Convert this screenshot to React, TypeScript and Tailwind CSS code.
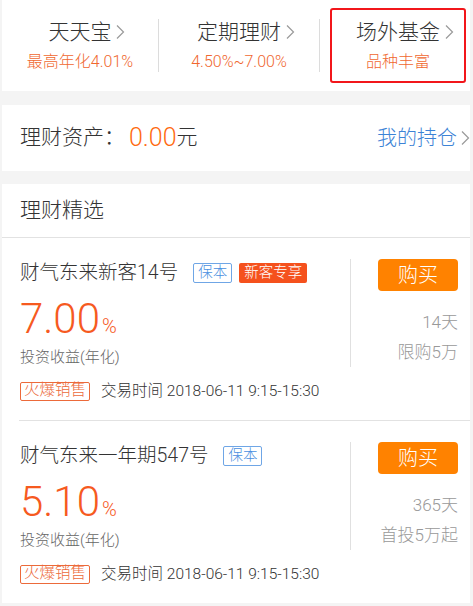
import React from "react";

const FONT = { fontFamily: 'Roboto, "Noto Sans CJK SC", sans-serif' };

function Chevron({ className = "" }: { className?: string }) {
  return (
    <svg width="10" height="16" viewBox="0 0 10 16" className={className}>
      <polyline points="2,1.5 8.5,8 2,14.5" fill="none" stroke="#9a9a9a" strokeWidth="1.2" />
    </svg>
  );
}

function Entry({ title, sub }: { title: string; sub: string }) {
  return (
    <div className="flex flex-col items-center gap-[7px]">
      <div className="relative text-[21px] leading-[26px] text-[#333]">
        {title}
        <Chevron className="absolute left-full top-[5px] ml-[4px]" />
      </div>
      <div className="text-[16px] leading-[20px] text-[#f0672f]">{sub}</div>
    </div>
  );
}

type Product = {
  name: string;
  isNew: boolean;
  rate: string;
  days: string;
  limit: string;
  inset: boolean;
};

const products: Product[] = [
  { name: "财气东来新客14号", isNew: true, rate: "7.00", days: "14天", limit: "限购5万", inset: false },
  { name: "财气东来一年期547号", isNew: false, rate: "5.10", days: "365天", limit: "首投5万起", inset: true },
];

function ProductRow({ p }: { p: Product }) {
  return (
    <div className={p.inset ? "ml-[17px] border-t border-[#e2e2e2]" : "border-t border-[#e2e2e2]"}>
      <div className={p.inset ? "pl-[1px] pr-[12px] pt-[21px] pb-[19px]" : "pl-[18px] pr-[12px] pt-[21px] pb-[19px]"}>
        <div className="flex">
          <div className="flex flex-1 flex-col">
            <div className="flex h-[28px] items-center">
              <span className="text-[19.5px] leading-[28px] text-[#333]">{p.name}</span>
              <span className="ml-[15px] flex h-[20px] items-center rounded-[2px] border border-[#6fa6e6] px-[4px] text-[14.5px] leading-none text-[#4a8fe0]">
                保本
              </span>
              {p.isNew && (
                <span className="ml-[7px] flex h-[20px] items-center rounded-[2px] bg-[#f5511d] px-[5px] text-[14.5px] leading-none text-white">
                  新客专享
                </span>
              )}
            </div>
            <div className="mt-[11px] flex h-[42px] items-baseline text-[#f65a1f]">
              <span className="text-[42px] leading-[42px]">{p.rate}</span>
              <span className="ml-[2px] text-[20px] leading-none">%</span>
            </div>
            <div className="mt-[7px] text-[15px] leading-[20px] text-[#666]">投资收益(年化)</div>
          </div>
          <div className="w-px bg-[#e0e0e0]" />
          <div className="flex w-[107px] flex-col items-end">
            <button className="flex h-[32px] w-[80px] items-center justify-center rounded-[4px] bg-[#ff8200] text-[20px] text-white">
              购买
            </button>
            <div className="mt-[20px] text-[17px] leading-[22px] text-[#999]">{p.days}</div>
            <div className="mt-[8px] text-[17px] leading-[22px] text-[#999]">{p.limit}</div>
          </div>
        </div>
        <div className="mt-[14px] flex items-center">
          <span className="flex h-[19px] items-center rounded-[2px] border border-[#ec6a3a] px-[3px] text-[15.5px] leading-none text-[#ec6a3a]">
            火爆销售
          </span>
          <span className="ml-[11px] text-[15.5px] leading-[20px] text-[#333]">交易时间 2018-06-11 9:15-15:30</span>
        </div>
      </div>
    </div>
  );
}

export default function App() {
  return (
    <div className="min-h-screen bg-[#f4f4f4] pl-[2px] pr-[3px] font-light" style={FONT}>
      <div className="flex h-[91px] items-center bg-white">
        <div className="flex w-[156px] justify-center">
          <Entry title="天天宝" sub="最高年化4.01%" />
        </div>
        <div className="h-[53px] w-px bg-[#dcdcdc]" />
        <div className="flex w-[160px] justify-center">
          <Entry title="定期理财" sub="4.50%~7.00%" />
        </div>
        <div className="h-[53px] w-px bg-[#dcdcdc]" />
        <div className="flex flex-1 pl-[10px]">
          <div className="flex h-[75px] w-[136px] items-center justify-center rounded-[3px] border-2 border-[#f2161b]">
            <Entry title="场外基金" sub="品种丰富" />
          </div>
        </div>
      </div>

      <div className="mt-[14px] flex h-[66px] items-center bg-white pl-[18px]">
        <span className="text-[21px] text-[#333]">理财资产：</span>
        <span className="ml-[4px] text-[25px] text-[#ff6a10]">0.00</span>
        <span className="text-[21px] text-[#333]">元</span>
        <div className="ml-auto flex items-center">
          <span className="text-[20px] text-[#3c83d6]">我的持仓</span>
          <Chevron className="ml-[3px]" />
        </div>
      </div>

      <div className="mt-[13px] bg-white">
        <div className="flex h-[53px] items-center pl-[18px] text-[21px] text-[#333]">理财精选</div>
        {products.map((p) => (
          <ProductRow key={p.name} p={p} />
        ))}
      </div>
    </div>
  );
}
